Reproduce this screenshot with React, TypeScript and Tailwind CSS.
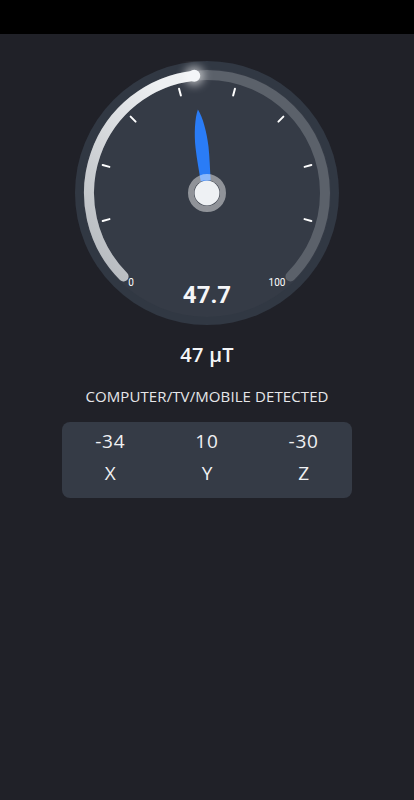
const ticks = [-105, -75, -45, -15, 15, 45, 75, 105];

function polar(r: number, deg: number) {
  const a = (deg * Math.PI) / 180;
  return { x: 132 + r * Math.sin(a), y: 132 - r * Math.cos(a) };
}

function Gauge({ value }: { value: number }) {
  const angle = -135 + (value / 100) * 270;
  const start = polar(118, -135);
  const end = polar(118, 135);
  const cur = polar(118, angle);

  return (
    <svg width="264" height="264" viewBox="0 0 264 264">
      <defs>
        <linearGradient id="fill" x1="0" y1="1" x2="0.6" y2="0">
          <stop offset="0" stopColor="#b2b6bb" />
          <stop offset="1" stopColor="#eef0f2" />
        </linearGradient>
        <filter id="glow" x="-1" y="-1" width="3" height="3">
          <feGaussianBlur stdDeviation="4" />
        </filter>
      </defs>
      <circle cx="132" cy="132" r="132" fill="#313843" />
      <circle cx="132" cy="132" r="124" fill="#353b46" />
      <path
        d={`M ${start.x} ${start.y} A 118 118 0 1 1 ${end.x} ${end.y}`}
        fill="none"
        stroke="#5b616a"
        strokeWidth="10"
        strokeLinecap="round"
      />
      <path
        d={`M ${start.x} ${start.y} A 118 118 0 0 1 ${cur.x} ${cur.y}`}
        fill="none"
        stroke="url(#fill)"
        strokeWidth="10"
        strokeLinecap="round"
      />
      <circle cx={cur.x} cy={cur.y} r="10" fill="#ffffff" opacity="0.55" filter="url(#glow)" />
      <circle cx={cur.x} cy={cur.y} r="6" fill="#f4f6f8" />
      {ticks.map((t) => {
        const a = polar(101, t);
        const b = polar(108, t);
        return (
          <line
            key={t}
            x1={a.x}
            y1={a.y}
            x2={b.x}
            y2={b.y}
            stroke="#ffffff"
            strokeWidth="2"
            strokeLinecap="round"
          />
        );
      })}
      <g transform={`translate(132 132) rotate(${angle})`}>
        <path
          d="M 0 -84 C 4 -76, 6.5 -60, 6.5 -46 C 6.5 -34, 5.5 -24, 5 -12 L -5 -12 C -5.5 -24, -6.5 -34, -6.5 -46 C -6.5 -60, -4 -76, 0 -84 Z"
          fill="#2a7cf6"
        />
      </g>
      <circle cx="132" cy="132" r="16" fill="none" stroke="#ffffff" strokeOpacity="0.45" strokeWidth="6" />
      <circle cx="132" cy="132" r="12.5" fill="#eef1f4" />
      <text
        x="56"
        y="225"
        textAnchor="middle"
        fontSize="10"
        fill="#ffffff"
        fontFamily="Roboto, sans-serif"
      >
        0
      </text>
      <text
        x="202"
        y="225"
        textAnchor="middle"
        fontSize="10"
        fill="#ffffff"
        fontFamily="Roboto, sans-serif"
      >
        100
      </text>
      <text
        x="132"
        y="242"
        textAnchor="middle"
        fontSize="24"
        fontWeight="700"
        fill="#f5f6f8"
        fontFamily="Roboto, sans-serif"
      >
        {value.toFixed(1)}
      </text>
    </svg>
  );
}

export default function App() {
  const axes = [
    { label: "X", value: -34 },
    { label: "Y", value: 10 },
    { label: "Z", value: -30 },
  ];

  return (
    <div className="flex min-h-[800px] flex-col bg-[#202128] font-['Open_Sans',sans-serif] text-white">
      <div className="h-[34px] bg-black" />
      <div className="flex flex-col items-center pt-[27px]">
        <Gauge value={47.7} />
        <div className="mt-[16px] text-[20px] font-semibold leading-[28px] tracking-[0.3px] text-[#f4f5f7]">
          47 μT
        </div>
        <div className="mt-[17px] text-[15px] leading-[20px] tracking-[0.1px] text-[#e6e7ea]">
          COMPUTER/TV/MOBILE DETECTED
        </div>
        <div className="mt-[16px] grid w-[290px] grid-cols-3 rounded-lg bg-[#353b46] pb-[12px] pt-[5px] text-center text-[#f0f1f3]">
          {axes.map((a) => (
            <div key={a.label} className="flex flex-col items-center">
              <span className="text-[19px] leading-[28px] tracking-[0.8px]">{a.value}</span>
              <span className="mt-[5px] text-[19px] leading-[26px]">{a.label}</span>
            </div>
          ))}
        </div>
      </div>
    </div>
  );
}
